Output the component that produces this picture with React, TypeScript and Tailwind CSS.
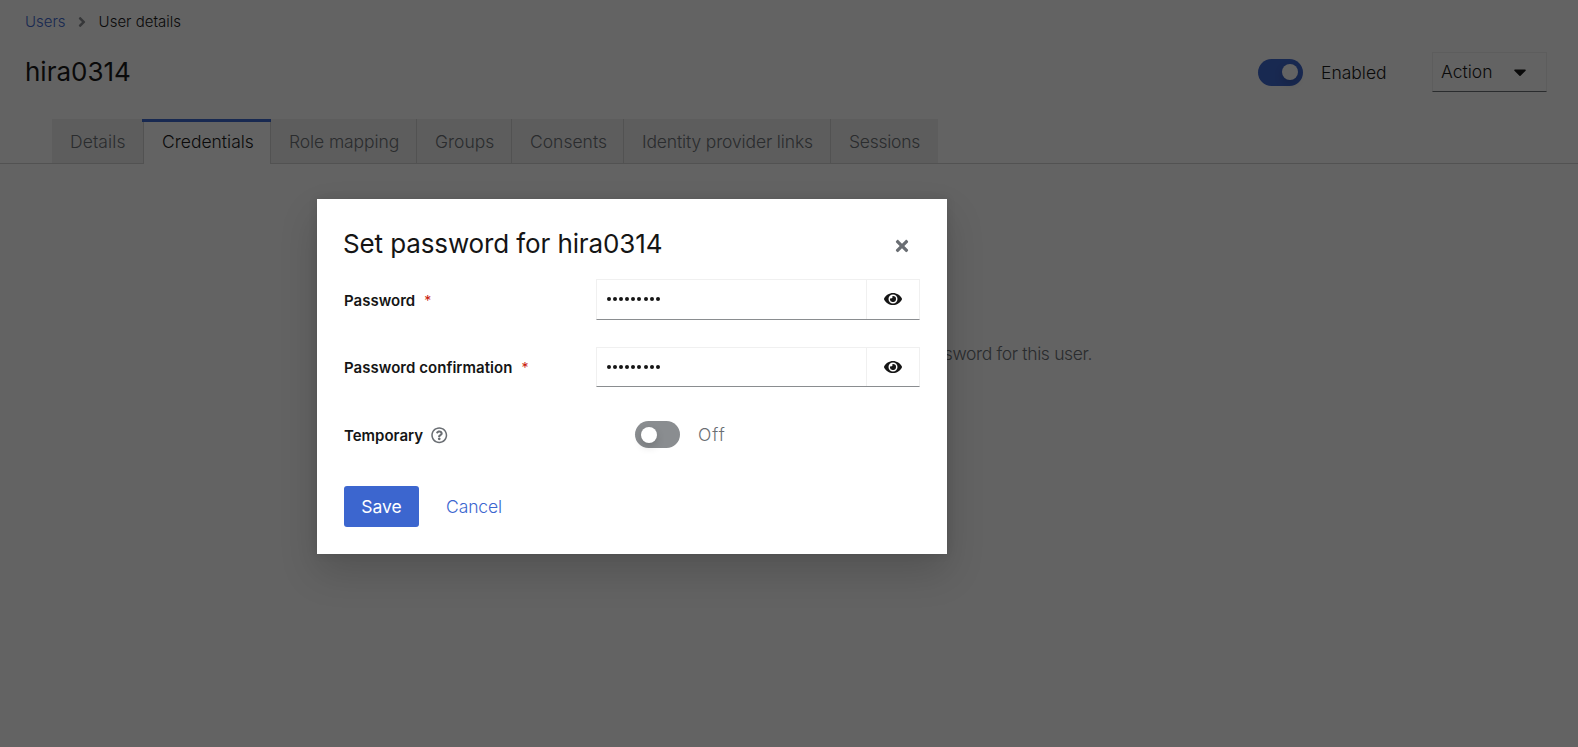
import React from "react";
import {
  FaAngleRight,
  FaCaretDown,
  FaEye,
  FaRegQuestionCircle,
  FaTimes,
} from "react-icons/fa";

const tabs = [
  { label: "Details", box: "w-[91px]", pad: "pl-[18px] tracking-[0.1px]" },
  { label: "Credentials", box: "w-[128px]", pad: "pl-[18px]", active: true },
  { label: "Role mapping", box: "w-[146px] border-r", pad: "pl-[18px] tracking-[-0.1px]" },
  { label: "Groups", box: "w-[95px] border-r", pad: "pl-[18px]" },
  { label: "Consents", box: "w-[112px] border-r", pad: "pl-[18px]" },
  { label: "Identity provider links", box: "w-[207px] border-r", pad: "pl-[18px] tracking-[-0.14px]" },
  { label: "Sessions", box: "w-[107px]", pad: "pl-[18px] tracking-[-0.25px]" },
];

function Tabs() {
  return (
    <nav className="flex h-[45px] border-b border-[#d2d2d2] pl-[52px]">
      {tabs.map((t) =>
        t.active ? (
          <div
            key={t.label}
            className={`relative h-[45px] border-x border-[#d2d2d2] bg-white leading-[45px] text-[#151515] ${t.box} ${t.pad}`}
          >
            <span className="absolute top-0 -right-px -left-[2px] h-[3px] bg-[#3c66cf]" />
            {t.label}
          </div>
        ) : (
          <div
            key={t.label}
            className={`h-[44px] border-[#d2d2d2] bg-[#f0f0f0] leading-[45px] text-[#6a6e73] ${t.box} ${t.pad}`}
          >
            {t.label}
          </div>
        ),
      )}
    </nav>
  );
}

function PasswordField({
  label,
  labelPad,
  height,
}: {
  label: string;
  labelPad: string;
  height: string;
}) {
  return (
    <div className="flex h-[68px] items-start">
      <label
        className={`flex w-[252px] text-[15px] leading-[22px] font-semibold text-[#151515] ${labelPad}`}
      >
        {label}
        <span className="ml-[9px] text-[14px] leading-[21px] font-normal text-[#c9190b]">*</span>
      </label>
      <div className={`flex w-[324px] border border-[#f0f0f0] border-b-[#8a8d90] ${height}`}>
        <div className="flex w-[269px] items-center gap-[2.1px] pl-[10px]">
          {Array.from({ length: 9 }, (_, i) => (
            <span key={i} className="mb-px size-[4px] rounded-full bg-[#151515]" />
          ))}
        </div>
        <button className="flex flex-1 items-center justify-center border-l border-[#f0f0f0] pb-px text-[18px] text-[#151515]">
          <FaEye />
        </button>
      </div>
    </div>
  );
}

function PasswordDialog() {
  return (
    <section className="flex h-[355px] w-[630px] flex-col bg-white px-[27px] pt-[27px] shadow-[0_18px_36px_rgba(3,3,3,0.16),0_0_9px_rgba(3,3,3,0.1)]">
      <header className="flex h-[53px] items-start justify-between">
        <h2 className="-ml-px text-[26px] leading-[35px] font-normal tracking-[-0.12px] text-[#151515]">
          Set password for hira0314
        </h2>
        <button className="mt-[11px] mr-[9px] text-[18px] text-[#6a6e73]">
          <FaTimes />
        </button>
      </header>
      <PasswordField label="Password" labelPad="pt-[11px]" height="h-[41px]" />
      <PasswordField label="Password confirmation" labelPad="pt-[10px] tracking-[0.04px]" height="h-[40px]" />
      <div className="flex h-[71px] items-start">
        <div className="flex w-[291px] items-start pt-[10px] text-[15px] leading-[22px] font-semibold text-[#151515]">
          Temporary
          <FaRegQuestionCircle className="mt-[2px] ml-[8px] text-[16.5px] text-[#6a6e73]" />
        </div>
        <div className="mt-[6px] flex h-[27px] w-[45px] items-center rounded-full bg-[#8a8d90] pl-[6px]">
          <span className="size-4 rounded-full bg-white shadow-[0_4px_8px_rgba(3,3,3,0.16)]" />
        </div>
        <span className="mt-[6px] ml-[18px] leading-[27px] tracking-[1px] text-[#6a6e73]">
          Off
        </span>
      </div>
      <footer className="flex">
        <button className="h-[41px] w-[75px] rounded-[3px] bg-[#3c66cf] pt-[2px] font-normal text-white">
          Save
        </button>
        <button className="ml-[27px] h-[41px] pt-[2px] font-light tracking-[-0.1px] text-[#3c66cf]">
          Cancel
        </button>
      </footer>
    </section>
  );
}

export default function App() {
  return (
    <div className="relative h-[747px] w-full overflow-hidden bg-white font-['Inter',sans-serif] text-[17.5px] font-light">
      <div className="flex h-[43px] items-center pt-px pl-[25px] text-[15px] text-[#151515]">
        <span className="text-[#3c66cf]">Users</span>
        <FaAngleRight className="mr-[9px] ml-[8px] text-[16px] text-[#8a8d90]" />
        <span>User details</span>
      </div>
      <header className="flex h-[76px] items-start justify-between pr-[31px] pl-[25px] text-[#151515]">
        <h1 className="pt-[11px] text-[26px] leading-[36px] font-normal">hira0314</h1>
        <div className="flex items-center pt-[9px]">
          <div className="flex h-[27px] w-[45px] items-center justify-end rounded-full bg-[#3c66cf] pr-[5px]">
            <span className="size-4 rounded-full bg-white shadow-[0_4px_8px_rgba(3,3,3,0.16)]" />
          </div>
          <span className="ml-[18px] w-[111px] pt-[3px]">Enabled</span>
          <button className="flex h-10 w-[115px] items-center border border-[#f0f0f0] border-b-[#6a6e73] pl-2 text-left">
            <span className="w-[69px]">Action</span>
            <FaCaretDown className="text-[20px]" />
          </button>
        </div>
      </header>
      <Tabs />
      <main className="flex justify-end pt-[176px] pr-[486px] leading-[27px] tracking-[-0.35px] text-[#6a6e73]">
        You can set a password for this user.
      </main>
      <div className="absolute inset-0 bg-[rgba(3,3,3,0.62)] pt-[199px] pl-[317px]">
        <PasswordDialog />
      </div>
    </div>
  );
}
